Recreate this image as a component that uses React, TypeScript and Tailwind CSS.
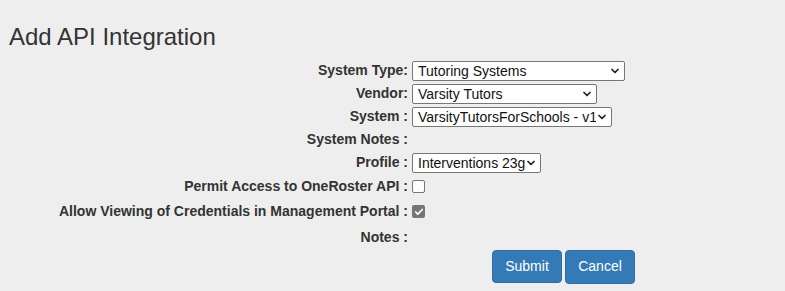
import { ChevronDown, Check } from "lucide-react";

const FakeSelect = ({ value, width }: { value: string; width: string }) => (
  <div
    className={`relative flex h-[20px] items-center rounded-[2px] border border-[#767676] bg-white pl-[5px] text-[14px] leading-none text-[#111] ${width}`}
  >
    <span className="whitespace-nowrap">{value}</span>
    <ChevronDown className="absolute right-[3px] top-1/2 h-[12px] w-[12px] -translate-y-1/2 bg-white text-[#222]" strokeWidth={3.5} />
  </div>
);

const Row = ({ label, height, children }: { label: string; height: string; children?: React.ReactNode }) => (
  <div className={`flex items-center ${height}`}>
    <div className="w-[408px] shrink-0 whitespace-nowrap text-right text-[14px] font-bold text-[#333]">{label}</div>
    <div className="ml-[4px] flex items-center">{children}</div>
  </div>
);

export default function App() {
  return (
    <div className="h-[291px] w-[785px] bg-[#eeeeee] font-['Liberation_Sans',Arial,sans-serif] text-[#333]">
      <h3 className="pl-[9px] pt-[24px] text-[24px] leading-[26px] font-normal text-[#333]">Add API Integration</h3>
      <div className="mt-[9px]">
        <Row label="System Type:" height="h-[23px]">
          <FakeSelect value="Tutoring Systems" width="w-[213px]" />
        </Row>
        <Row label="Vendor:" height="h-[23px]">
          <FakeSelect value="Varsity Tutors" width="w-[185px]" />
        </Row>
        <Row label="System :" height="h-[23px]">
          <FakeSelect value="VarsityTutorsForSchools - v1" width="w-[200px]" />
        </Row>
        <Row label="System Notes :" height="h-[23px]" />
        <Row label="Profile :" height="h-[23px]">
          <FakeSelect value="Interventions 23g" width="w-[129px]" />
        </Row>
        <Row label="Permit Access to OneRoster API :" height="h-[25px]">
          <div className="h-[13px] w-[13px] rounded-[2px] border border-[#767676] bg-white" />
        </Row>
        <Row label="Allow Viewing of Credentials in Management Portal :" height="h-[25px]">
          <div className="flex h-[13px] w-[13px] items-center justify-center rounded-[2px] bg-[#767676]">
            <Check className="h-[10px] w-[10px] text-white" strokeWidth={4} />
          </div>
        </Row>
        <Row label="Notes :" height="h-[26px]" />
        <div className="flex items-start pl-[492px]">
          <button className="h-[33px] w-[70px] rounded-[4px] border border-[#2e6da4] bg-[#337ab7] text-[14px] text-white">
            Submit
          </button>
          <button className="ml-[3px] h-[34px] w-[70px] rounded-[4px] border border-[#2e6da4] bg-[#337ab7] pb-[2px] text-[14px] text-white">
            Cancel
          </button>
        </div>
      </div>
    </div>
  );
}
